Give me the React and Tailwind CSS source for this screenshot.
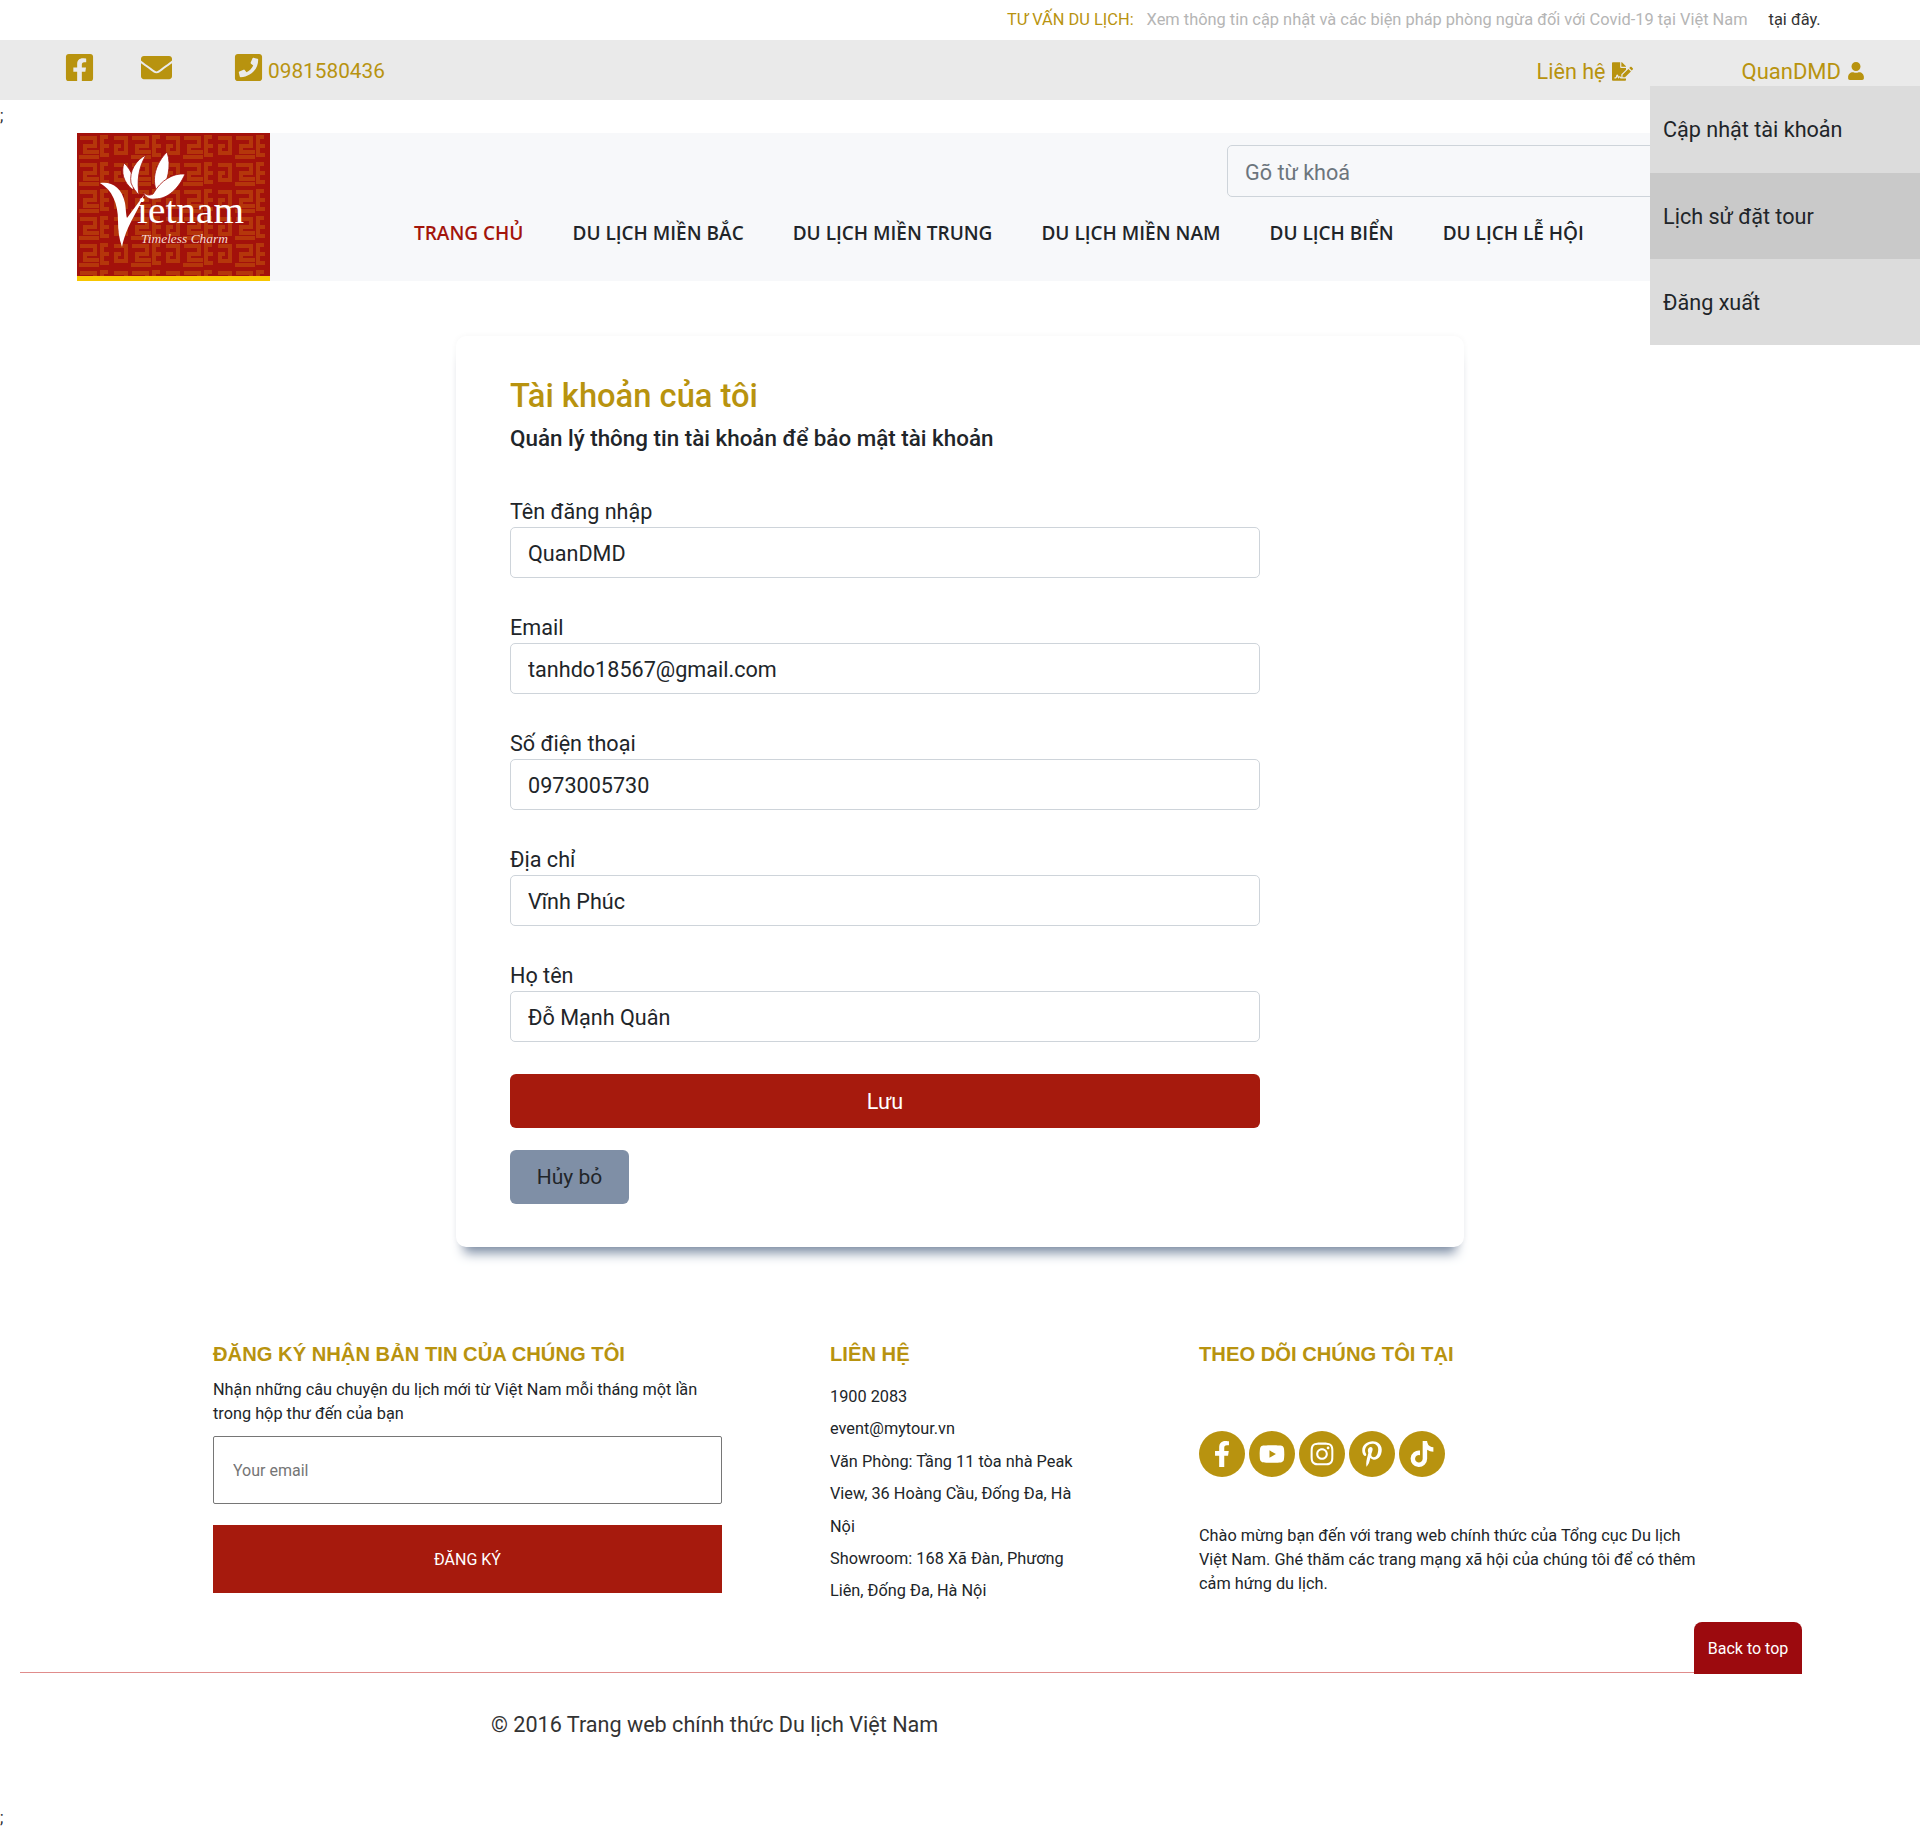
import React from "react";
import {
  FaFacebookSquare,
  FaEnvelope,
  FaPhoneSquare,
  FaFileSignature,
  FaUser,
  FaFacebookF,
  FaYoutube,
  FaInstagram,
  FaPinterestP,
  FaTiktok,
} from "react-icons/fa";

const navItems = [
  "TRANG CHỦ",
  "DU LỊCH MIỀN BẮC",
  "DU LỊCH MIỀN TRUNG",
  "DU LỊCH MIỀN NAM",
  "DU LỊCH BIỂN",
  "DU LỊCH LỄ HỘI",
];

const fields = [
  { label: "Tên đăng nhập", value: "QuanDMD" },
  { label: "Email", value: "tanhdo18567@gmail.com" },
  { label: "Số điện thoại", value: "0973005730" },
  { label: "Địa chỉ", value: "Vĩnh Phúc" },
  { label: "Họ tên", value: "Đỗ Mạnh Quân" },
];

const contactLines = [
  "1900 2083",
  "event@mytour.vn",
  "Văn Phòng: Tầng 11 tòa nhà Peak",
  "View, 36 Hoàng Cầu, Đống Đa, Hà",
  "Nội",
  "Showroom: 168 Xã Đàn, Phương",
  "Liên, Đống Đa, Hà Nội",
];

const socials = [FaFacebookF, FaYoutube, FaInstagram, FaPinterestP, FaTiktok];

const Logo = () => (
  <svg viewBox="0 0 193 148" className="w-[193px] h-[148px] shrink-0">
    <defs>
      <pattern id="meander" width="52" height="27" patternUnits="userSpaceOnUse">
        <rect width="52" height="27" fill="#a3110b" />
        <path
          d="M3 5h15v8H8v6h14M2 24h20M31 4h-6v18h7M25 13h7M37 5h12v15H39v-7h5"
          fill="none"
          stroke="#b5360b"
          strokeWidth="4"
        />
      </pattern>
    </defs>
    <rect width="193" height="148" fill="url(#meander)" />
    <rect y="143" width="193" height="5" fill="#f7c600" />
    {/* lotus */}
    <g fill="#fff" stroke="#a3110b" strokeWidth="0.8">
      <path d="M47 30c-3 9-1 19 9 27 2-9-1-20-9-27z" />
      <path d="M69 22c-10 5-17 16-15 28 2 5 5 9 8 12-2-13-1-27 7-40z" />
      <path d="M90 19c-11 11-16 27-10 40 3 3 3 3 4 2 6-12 11-28 6-42z" />
      <path d="M108 41c-12-1-24 6-32 20-4 2-7 1-10-2 2 5 6 8 12 7 13 0 24-11 30-25z" />
    </g>
    <path d="M23 50c11-2 22 4 25 20 1 6 1 12 2 15l17-23c-4 11-12 24-16 33-3 7-5 13-6 19-3-8-4-17-4-26 0-18-6-31-18-38z" fill="#fff" />
    <text x="60" y="90" fontFamily="'Liberation Serif',serif" fontSize="38" fill="#fff" textLength="107" lengthAdjust="spacingAndGlyphs">
      ietnam
    </text>
    <text x="64" y="110" fontFamily="'Liberation Serif',serif" fontStyle="italic" fontSize="13" fill="#f6dcd0" textLength="87" lengthAdjust="spacingAndGlyphs">
      Timeless Charm
    </text>
  </svg>
);

const App = () => {
  return (
    <div className="relative min-h-[1828px] bg-white overflow-hidden [font-family:Roboto,sans-serif] text-[#212529]">
      {/* Notice */}
      <div className="h-10 flex items-center pl-[1007px] text-[16.4px] whitespace-nowrap">
        <span className="text-[#b8930f]">TƯ VẤN DU LỊCH:</span>
        <span className="ml-[13px] text-[#b5b5b5]">
          Xem thông tin cập nhật và các biện pháp phòng ngừa đối với Covid-19 tại Việt Nam
        </span>
        <span className="ml-[21px] text-[#333]">tại đây.</span>
      </div>

      {/* Contact bar */}
      <div className="relative h-[60px] bg-[#eaeaea] flex items-center text-[#b8930f] text-[21.6px]">
        <FaFacebookSquare className="ml-[64px] text-[31px] -mt-[5px]" />
        <FaEnvelope className="ml-[46px] text-[31px] -mt-[5px]" />
        <FaPhoneSquare className="ml-[61px] text-[31px] -mt-[5px]" />
        <span className="ml-1 pt-1 text-[20.8px]">0981580436</span>
        <span className="ml-auto flex items-center gap-1.5 pt-1">
          Liên hệ <FaFileSignature className="text-[21px]" />
        </span>
        <span className="ml-[109px] mr-[55px] flex items-center gap-1.5 pt-0.5 text-[22px]">
          QuanDMD <FaUser className="text-[18px]" />
        </span>
      </div>

      <div className="h-[33px] text-[16px] leading-[32px]">;</div>

      {/* Header */}
      <div className="flex h-[148px] mx-[77px] bg-[#f7f8fa]">
        <Logo />
        <div className="flex-1">
          <input
            readOnly
            placeholder="Gõ từ khoá"
            className="block mt-3 ml-[957px] w-[500px] h-[52px] px-[17px] pt-0.5 text-[21.6px] bg-[#f7f8fa] border border-[#ced4da] rounded-[5px] placeholder:text-[#6c757d]"
          />
          <div className="flex gap-[49px] pl-[144px] mt-[22px] text-[19px] font-semibold [font-family:'Open_Sans',sans-serif] whitespace-nowrap">
            {navItems.map((item, i) => (
              <a key={item} href="#" className={i === 0 ? "text-[#a3150c]" : "text-[#212529]"}>
                {item}
              </a>
            ))}
          </div>
        </div>
      </div>

      {/* User dropdown */}
      <div className="absolute top-[86px] right-0 w-[270px] text-[21.6px] text-[#212529]">
        <div className="h-[87px] flex items-center pl-[13px] pt-0.5 bg-[#dcdcdc]">Cập nhật tài khoản</div>
        <div className="h-[86px] flex items-center pl-[13px] pt-0.5 bg-[#c9c9c9]">Lịch sử đặt tour</div>
        <div className="h-[86px] flex items-center pl-[13px] pt-0.5 bg-[#dcdcdc]">Đăng xuất</div>
      </div>

      {/* Account card */}
      <div className="ml-[456px] mt-[55px] w-[1008px] px-[54px] pt-[37px] pb-[43px] bg-white rounded-[10px] shadow-[0_0_6px_#0000000a,0_14px_12px_-8px_#7f8fa6]">
        <h1 className="h-[44px] leading-[47px] text-[32.7px] font-medium text-[#b8930f]">Tài khoản của tôi</h1>
        <h2 className="h-[42px] leading-[43px] text-[22.4px] font-medium text-[#212529]">
          Quản lý thông tin tài khoản để bảo mật tài khoản
        </h2>
        <form className="mt-[36px] w-[750px] flex flex-col gap-[33px]">
          {fields.map((field) => (
            <div key={field.label}>
              <label className="block h-[32px] leading-[34px] text-[21.6px]">{field.label}</label>
              <input
                readOnly
                value={field.value}
                className="block w-full h-[51px] px-[17px] pt-0.5 text-[21.6px] text-[#212529] bg-white border border-[#ced4da] rounded-[5px]"
              />
            </div>
          ))}
        </form>
        <button className="block mt-[32px] pt-0.5 w-[750px] h-[54px] bg-[#a61a0d] text-white text-[21.6px] rounded-[6px]">
          Lưu
        </button>
        <button className="block mt-[22px] pt-0.5 w-[119px] h-[54px] bg-[#7f8fa6] text-[#212529] text-[21px] rounded-[6px]">
          Hủy bỏ
        </button>
      </div>

      {/* Footer */}
      <div className="relative ml-5 w-[1782px] mt-[94px] h-[332px] border-b border-[#e08c8c]">
        <div className="flex pl-[193px] text-[16.3px]">
          <div className="w-[617px]">
            <h3 className="h-6 leading-[26px] text-[20.2px] font-bold text-[#b8930f] [font-family:'Liberation_Sans',sans-serif]">
              ĐĂNG KÝ NHẬN BẢN TIN CỦA CHÚNG TÔI
            </h3>
            <p className="mt-[13px] w-[509px] leading-6">
              Nhận những câu chuyện du lịch mới từ Việt Nam mỗi tháng một lần trong hộp thư đến của bạn
            </p>
            <input
              readOnly
              placeholder="Your email"
              className="block mt-[10px] w-[509px] h-[68px] px-[19px] text-[16px] border border-[#767676] rounded-[2px] placeholder:text-[#757575]"
            />
            <button className="block mt-[21px] pt-0.5 w-[509px] h-[68px] bg-[#a61a0d] text-white text-[16px]">ĐĂNG KÝ</button>
          </div>
          <div className="w-[369px]">
            <h3 className="h-6 leading-[26px] text-[20.2px] font-bold text-[#b8930f] [font-family:'Liberation_Sans',sans-serif]">
              LIÊN HỆ
            </h3>
            <div className="mt-4 leading-[32.4px] whitespace-nowrap">
              {contactLines.map((line) => (
                <div key={line}>{line}</div>
              ))}
            </div>
          </div>
          <div className="w-[500px]">
            <h3 className="h-6 leading-[26px] text-[20.2px] font-bold text-[#b8930f] [font-family:'Liberation_Sans',sans-serif]">
              THEO DÕI CHÚNG TÔI TẠI
            </h3>
            <div className="mt-[66px] flex gap-1">
              {socials.map((Icon, i) => (
                <span key={i} className="w-[46px] h-[46px] rounded-full bg-[#b8930f] flex items-center justify-center text-white text-[26px]">
                  <Icon />
                </span>
              ))}
            </div>
            <p className="mt-[47px] leading-6">
              Chào mừng bạn đến với trang web chính thức của Tổng cục Du lịch Việt Nam. Ghé thăm các trang mạng xã hội của chúng tôi để có thêm cảm hứng du lịch.
            </p>
          </div>
        </div>
        <a href="#" className="absolute right-0 -bottom-0.5 w-[108px] h-[52px] pt-0.5 flex items-center justify-center bg-[#9c0a0e] text-white text-[16px] rounded-t-[8px]">
          Back to top
        </a>
      </div>

      <div className="ml-[491px] mt-[34px] text-[21.6px] leading-[36px] text-[#333]">© 2016 Trang web chính thức Du lịch Việt Nam</div>
      <div className="mt-[63px] text-[16px] leading-6">;</div>
    </div>
  );
};

export default App;
